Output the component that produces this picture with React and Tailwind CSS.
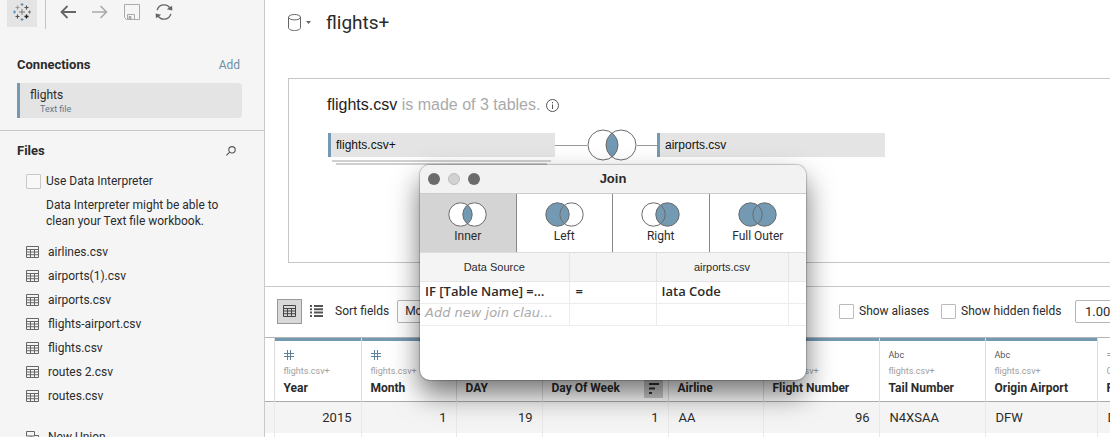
const files = ["airlines.csv", "airports(1).csv", "airports.csv", "flights-airport.csv", "flights.csv", "routes 2.csv", "routes.csv"];

const columns = [
  { name: "Year", kind: "number", source: "flights.csv+", value: "2015", width: "w-[87px]", bar: true },
  { name: "Month", kind: "number", source: "flights.csv+", value: "1", width: "w-[95px]", bar: true },
  { name: "DAY", kind: "number", source: "flights.csv+", value: "19", width: "w-[86px]", bar: true },
  { name: "Day Of Week", kind: "number", source: "flights.csv+", value: "1", width: "w-[126px]", bar: true, sort: true },
  { name: "Airline", kind: "Abc", source: "flights.csv+", value: "AA", width: "w-[95px]", bar: true },
  { name: "Flight Number", kind: "number", source: "flights.csv+", value: "96", width: "w-[116px]", bar: true },
  { name: "Tail Number", kind: "Abc", source: "flights.csv+", value: "N4XSAA", width: "w-[106px]", bar: true },
  { name: "Origin Airport", kind: "Abc", source: "flights.csv+", value: "DFW", width: "w-[112px]", bar: true },
  { name: "F", kind: "=Abc", source: "Calculation", value: "DFW", width: "w-[120px]" },
];

const joins = [
  { name: "Inner", left: "#fff", right: "#fff", lens: "#7399b3", active: true },
  { name: "Left", left: "#7399b3", right: "#fff", lens: "#7399b3" },
  { name: "Right", left: "#fff", right: "#7399b3", lens: "#7399b3" },
  { name: "Full Outer", left: "#7399b3", right: "#7399b3", lens: "#7399b3" },
];

function Venn({ left, right, lens, className }) {
  return (
    <svg viewBox="0 0 39 25" className={className} aria-hidden="true">
      <circle cx="12.5" cy="12.5" r="11.7" fill={left} />
      <circle cx="26.5" cy="12.5" r="11.7" fill={right} />
      <path d="M19.5 3.1A11.7 11.7 0 0 1 19.5 21.9A11.7 11.7 0 0 1 19.5 3.1Z" fill={lens} />
      <g fill="none" stroke="#6b6b6b">
        <circle cx="12.5" cy="12.5" r="11.7" />
        <circle cx="26.5" cy="12.5" r="11.7" />
      </g>
    </svg>
  );
}

function BigVenn() {
  return (
    <svg viewBox="0 0 50 32" className="h-8 w-[50px] shrink-0" aria-hidden="true">
      <circle cx="16" cy="16" r="15" fill="#fff" />
      <circle cx="34" cy="16" r="15" fill="#fff" />
      <path d="M25 4A15 15 0 0 1 25 28A15 15 0 0 1 25 4Z" fill="#7399b3" />
      <g fill="none" stroke="#6b6b6b">
        <circle cx="16" cy="16" r="15" />
        <circle cx="34" cy="16" r="15" />
      </g>
    </svg>
  );
}

function GridIcon({ className }) {
  return (
    <svg viewBox="0 0 13 12" className={className} fill="none" stroke="currentColor" aria-hidden="true">
      <path d="M.5 .5H12.5V11.5H.5ZM.5 3.5H12.5M.5 6H12.5M.5 8.7H12.5M4.5 3V11.5M8.5 3V11.5" />
    </svg>
  );
}

function HashIcon() {
  return (
    <svg viewBox="0 0 10 10" className="size-[10px]" fill="none" stroke="#5f8099" aria-hidden="true">
      <path d="M3.5 0V10M6.5 0V10M0 3.5H10M0 6.5H10" />
    </svg>
  );
}

function Logo() {
  return (
    <svg viewBox="0 0 18 18" className="size-[18px]" fill="none" aria-hidden="true">
      <path d="M9 6V12M6 9H12" stroke="#777" />
      <path d="M9 0V3M7.5 1.5H10.5M9 15V18M7.5 16.5H10.5M1.5 7.5V10.5M0 9H3" stroke="#5f92b5" strokeWidth="1.2" />
      <path d="M16.5 7.5V10.5M15 9H18" stroke="#777" strokeWidth="1.2" />
      <path d="M4.5 2.5V6.5M2.5 4.5H6.5" stroke="#999" strokeWidth="1.2" />
      <path d="M13.5 2.5V6.5M11.5 4.5H15.5M4.5 11.5V15.5M2.5 13.5H6.5" stroke="#555" strokeWidth="1.2" />
      <path d="M13.5 11.5V15.5M11.5 13.5H15.5" stroke="#222" strokeWidth="1.4" />
    </svg>
  );
}

function Sidebar() {
  return (
    <aside className="w-[265px] shrink-0 overflow-hidden border-r border-[#c9c9c9] bg-[#f5f5f5]">
      <div className="flex h-[29px] items-start pl-[7px]">
        <button aria-label="Start page" className="flex h-[27px] w-[30px] items-center justify-center bg-[#e4e4e4] pb-1">
          <Logo />
        </button>
        <span className="ml-2 h-full w-px bg-[#c4c4c4]" />
        <div className="flex h-6 items-center gap-4 pl-[14px] text-[#666]">
          <button aria-label="Back">
            <svg viewBox="0 0 16 14" className="h-[14px] w-4" fill="none" stroke="#666" strokeWidth="1.8"><path d="M16 7H1.5M7.5 1L1.5 7L7.5 13" /></svg>
          </button>
          <button aria-label="Forward">
            <svg viewBox="0 0 16 14" className="h-[14px] w-4" fill="none" stroke="#aaa" strokeWidth="1.6"><path d="M0 7H14.5M8.5 1L14.5 7L8.5 13" /></svg>
          </button>
          <button aria-label="Save">
            <svg viewBox="0 0 16 16" className="size-4" fill="none" stroke="#aaa"><path d="M.5 .5H15.5V15.5H2.5L.5 13.5ZM3.5 15.5V10.5H10.5V15.5" /><path d="M5 12.5H7V15H5Z" fill="#aaa" /></svg>
          </button>
          <button aria-label="Refresh" className="-ml-px">
            <svg viewBox="0 0 18 16" className="h-4 w-[18px]" fill="none" stroke="#666" strokeWidth="1.4">
              <path d="M2.2 6.2A7 7 0 0 1 15.2 4.6M15.8 9.8A7 7 0 0 1 2.8 11.4" />
              <path d="M11.8 5.2L17.4 6.4L17 1.8ZM6.2 10.8L.6 9.6L1 14.2Z" fill="#666" stroke="none" />
            </svg>
          </button>
        </div>
      </div>
      <section className="border-b border-[#c9c9c9] px-[17px] pt-[27px] pb-3">
        <div className="flex items-center justify-between pr-[7px] leading-[18px]">
          <h2 className="text-[13px] font-bold">Connections</h2>
          <a href="#add" className="text-xs leading-[18px] text-[#6d90a8]">Add</a>
        </div>
        <button className="mt-[9px] block h-[35px] w-[225px] rounded-r-sm border-l-3 border-[#7399b3] bg-[#e4e4e4] pl-[10px] text-left">
          <span className="block text-xs leading-4">flights</span>
          <span className="block pl-[10px] text-[9px] leading-3 text-[#5f7a8c]">Text file</span>
        </button>
      </section>
      <section className="px-[17px] pt-[11px]">
        <div className="flex items-center justify-between pr-[11px] leading-[18px]">
          <h2 className="text-[13px] font-bold">Files</h2>
          <button aria-label="Search files">
            <svg viewBox="0 0 10 10" className="size-[10px]" fill="none" stroke="#555" strokeWidth="1.1"><circle cx="6" cy="3.8" r="3.2" /><path d="M3.7 6.1L.4 9.4" /></svg>
          </button>
        </div>
        <label className="mt-3 flex items-center gap-[5px] pl-[9px] text-xs leading-[18px]">
          <input type="checkbox" className="size-[15px] appearance-none rounded-[1px] border border-[#c8c8c8] bg-[#f8f8f8]" />
          Use Data Interpreter
        </label>
        <p className="mt-[7px] pl-[29px] text-xs leading-4">Data Interpreter might be able to<br />clean your Text file workbook.</p>
        <ul className="mt-[11px] pl-[9px] text-xs leading-6">
          {files.map((f) => (
            <li key={f} className="flex items-center gap-[9px]"><GridIcon className="h-3 w-[13px] text-[#666]" />{f}</li>
          ))}
          <li className="mt-[17px] flex items-center gap-[9px]">
            <svg viewBox="0 0 13 12" className="h-3 w-[13px]" fill="none" stroke="#666"><path d="M.5 .5H8.5V5H.5ZM5 5V9H12.5V4.5H8.5" /></svg>
            New Union
          </li>
        </ul>
      </section>
    </aside>
  );
}

function Canvas() {
  return (
    <section className="mt-8 ml-[23px] h-[185px] border-t border-b border-l border-[#c6c6c6] pt-[15px] pl-[38px] font-['Liberation_Sans',Arial,sans-serif]">
      <div className="flex items-center gap-[6px] text-base leading-[22px] text-[#aaa]">
        <p><span className="text-[#222]">flights.csv</span> is made of 3 tables.</p>
        <svg viewBox="0 0 13 13" className="size-[13px]" fill="none" stroke="#555" aria-hidden="true"><circle cx="6.5" cy="6.5" r="6" /><path d="M6.5 5.5V10M6.5 3V4.3" /></svg>
      </div>
      <div className="mt-[13px] flex items-center pl-px text-xs text-[#111]">
        <div className="h-6 w-[227px] border-l-3 border-[#7399b3] bg-[#e4e4e4] pl-[5px] leading-6">flights.csv+</div>
        <span className="h-px w-8 bg-[#999]" />
        <BigVenn />
        <span className="h-px w-5 bg-[#999]" />
        <div className="h-6 w-[228px] border-l-3 border-[#7399b3] bg-[#e4e4e4] pl-[5px] leading-6">airports.csv</div>
      </div>
      <div className="-mt-px flex w-[229px] flex-col items-center gap-px">
        <span className="h-[2px] w-[219px] bg-[#d0d0d0]" />
        <span className="h-[2px] w-[211px] bg-[#d0d0d0]" />
      </div>
    </section>
  );
}

function GridToolbar() {
  return (
    <div className="flex h-[51px] items-center border-t border-[#c9c9c9] pb-[2px] pl-3 text-xs">
      <button aria-label="Grid view" className="flex h-[25px] w-[25px] shrink-0 items-center justify-center border border-[#999] bg-[#d8d8d8]">
        <GridIcon className="h-3 w-[13px] text-[#444]" />
      </button>
      <button aria-label="List view" className="ml-2 shrink-0">
        <svg viewBox="0 0 13 12" className="h-3 w-[13px]" fill="#555"><path d="M0 0H2V2H0ZM4 0H13V2H4ZM0 3.3H2V5.3H0ZM4 3.3H13V5.3H4ZM0 6.6H2V8.6H0ZM4 6.6H13V8.6H4ZM0 10H2V12H0ZM4 10H13V12H4Z" /></svg>
      </button>
      <label htmlFor="sort" className="ml-3 shrink-0">Sort fields</label>
      <select id="sort" className="ml-2 h-[23px] w-[120px] shrink-0 appearance-none rounded-xs border border-[#b5b5b5] px-[7px]">
        <option>Modified</option>
      </select>
      <div className="ml-auto flex shrink-0 items-center">
        <label className="flex w-[102px] items-center gap-[5px]"><input type="checkbox" className="size-[15px] appearance-none rounded-[1px] border border-[#bbb]" />Show aliases</label>
        <label className="flex w-[134px] items-center gap-[5px]"><input type="checkbox" className="size-[15px] appearance-none rounded-[1px] border border-[#bbb]" />Show hidden fields</label>
        <input aria-label="Row count" defaultValue="1.000" className="-mr-3 h-[23px] w-[47px] rounded-xs border border-[#b5b5b5] pl-[9px] text-[13px]" />
      </div>
    </div>
  );
}

function DataGrid() {
  return (
    <div className="overflow-hidden border-t border-[#b5b5b5] text-xs">
      <table className="w-[952px] table-fixed border-collapse text-left">
        <thead>
          <tr className="border-b border-[#aaa]">
            <th className="w-[9px] p-0" />
            {columns.map((c) => (
              <th key={c.name} className={`${c.width} border-l border-[#ddd] p-0 align-top font-normal`}>
                <div className={`h-[3px] ${c.bar ? "bg-[#7399b3]" : ""}`} />
                <div className="h-[60px] pt-[7px] pl-[9px]">
                  <div className="flex h-[14px] items-center text-[9px] text-[#555]">{c.kind === "number" ? <HashIcon /> : c.kind}</div>
                  <div className="mt-[3px] text-[9px] leading-3 text-[#a0a0a0]">{c.source}</div>
                  <div className="flex h-[22px] items-center justify-between whitespace-nowrap pr-[5px] font-bold">
                    {c.name}
                    {c.sort && (
                      <button aria-label="Sort" className="flex h-5 w-[19px] items-center justify-center bg-[#ccc]">
                        <svg viewBox="0 0 12 11" className="h-[11px] w-3" fill="#333"><path d="M2 0H12V2H2ZM2 4.5H8V6.5H2ZM2 9H5V11H2Z" /></svg>
                      </button>
                    )}
                  </div>
                </div>
              </th>
            ))}
          </tr>
        </thead>
        <tbody>
          {[true, false].map((filled, i) => (
            <tr key={i} className={filled ? "h-[31px] bg-[#f4f4f4]" : "h-[31px]"}>
              <td />
              {columns.map((c) => (
                <td key={c.name} className={`border-l border-[#e8e8e8] pr-[9px] pl-[10px] text-[13px] ${c.kind === "number" ? "text-right" : ""}`}>{filled ? c.value : ""}</td>
              ))}
            </tr>
          ))}
        </tbody>
      </table>
    </div>
  );
}

function JoinDialog() {
  return (
    <div role="dialog" aria-label="Join" className="absolute top-[165px] left-[155px] flex h-[215px] w-[386px] flex-col overflow-hidden rounded-[10px] bg-white shadow-[0_0_1px_1px_rgba(0,0,0,0.2),0_14px_28px_rgba(0,0,0,0.55)]">
      <div className="grid h-[29px] shrink-0 grid-cols-3 items-center border-b border-[#ccc] bg-[#f2f2f2] px-2">
        <div className="flex gap-2">
          <button aria-label="Close" className="size-3 rounded-full bg-[#6b6b6b]" />
          <button aria-label="Minimize" className="size-3 rounded-full border border-[#bbb] bg-[#d2d2d2]" />
          <button aria-label="Zoom" className="size-3 rounded-full bg-[#6b6b6b]" />
        </div>
        <h2 className="text-center font-['Liberation_Sans',Arial,sans-serif] text-[13px] font-bold">Join</h2>
      </div>
      <div className="grid h-[59px] shrink-0 grid-cols-4 divide-x divide-[#888] border-b border-[#ddd]">
        {joins.map((j) => (
          <button key={j.name} className={`flex flex-col items-center pt-2 text-xs leading-[18px] ${j.active ? "bg-[#d4d4d4]" : ""}`}>
            <Venn left={j.left} right={j.right} lens={j.lens} className="h-[25px] w-[39px]" />
            {j.name}
          </button>
        ))}
      </div>
      <table className="w-full table-fixed border-collapse text-left">
        <thead className="bg-[#f4f4f4] font-['Liberation_Sans',Arial,sans-serif] text-[11px]">
          <tr className="h-7 border-b border-[#e6e6e6]">
            <th className="w-[149px] p-0 text-center font-normal">Data Source</th>
            <th className="w-[87px] border-l border-[#e4e4e4]" />
            <th className="w-[132px] border-l border-[#e4e4e4] p-0 text-center font-normal">airports.csv</th>
            <th className="border-l border-[#e4e4e4]" />
          </tr>
        </thead>
        <tbody className="text-[13px] leading-[18px] whitespace-nowrap">
          <tr className="h-[22px] border-b border-[#ececec] font-['Open_Sans',sans-serif] font-semibold">
            <td className="p-0 pb-[2px] pl-[5px]">IF [Table Name] =…</td>
            <td className="border-l border-[#ececec] p-0 pb-[2px] pl-[6px]">=</td>
            <td className="border-l border-[#ececec] p-0 pb-[2px] pl-[5px]">Iata Code</td>
            <td className="border-l border-[#ececec] p-0" />
          </tr>
          <tr className="h-[22px] border-b border-[#ececec] font-['DejaVu_Sans',sans-serif] text-[#aaa] italic">
            <td className="p-0 pb-[2px] pl-[5px]">Add new join clau…</td>
            <td className="border-l border-[#ececec] p-0" />
            <td className="border-l border-[#ececec] p-0" />
            <td className="border-l border-[#ececec] p-0" />
          </tr>
        </tbody>
      </table>
    </div>
  );
}

export default function App() {
  return (
    <div className="flex h-screen overflow-hidden bg-white font-[Roboto,sans-serif] text-[#2b2b2b]">
      <Sidebar />
      <main className="relative min-w-0 flex-1 overflow-hidden">
        <header className="flex h-[46px] items-center pl-[23px]">
          <button aria-label="Data source type" className="flex items-center gap-[5px] pb-[2px]">
            <svg viewBox="0 0 13 17" className="h-[17px] w-[13px]" fill="none" stroke="#666"><path d="M.5 3.2V13.8C.5 15.3 3 16.5 6.5 16.5S12.5 15.3 12.5 13.8V3.2" /><ellipse cx="6.5" cy="3.2" rx="6" ry="2.7" /></svg>
            <svg viewBox="0 0 5 3" className="h-[3px] w-[5px]" fill="#666"><path d="M0 0H5L2.5 3Z" /></svg>
          </button>
          <h1 className="pl-[15px] text-[19px] font-normal">flights+</h1>
        </header>
        <Canvas />
        <div className="h-[23px]" />
        <GridToolbar />
        <DataGrid />
        <JoinDialog />
      </main>
    </div>
  );
}
